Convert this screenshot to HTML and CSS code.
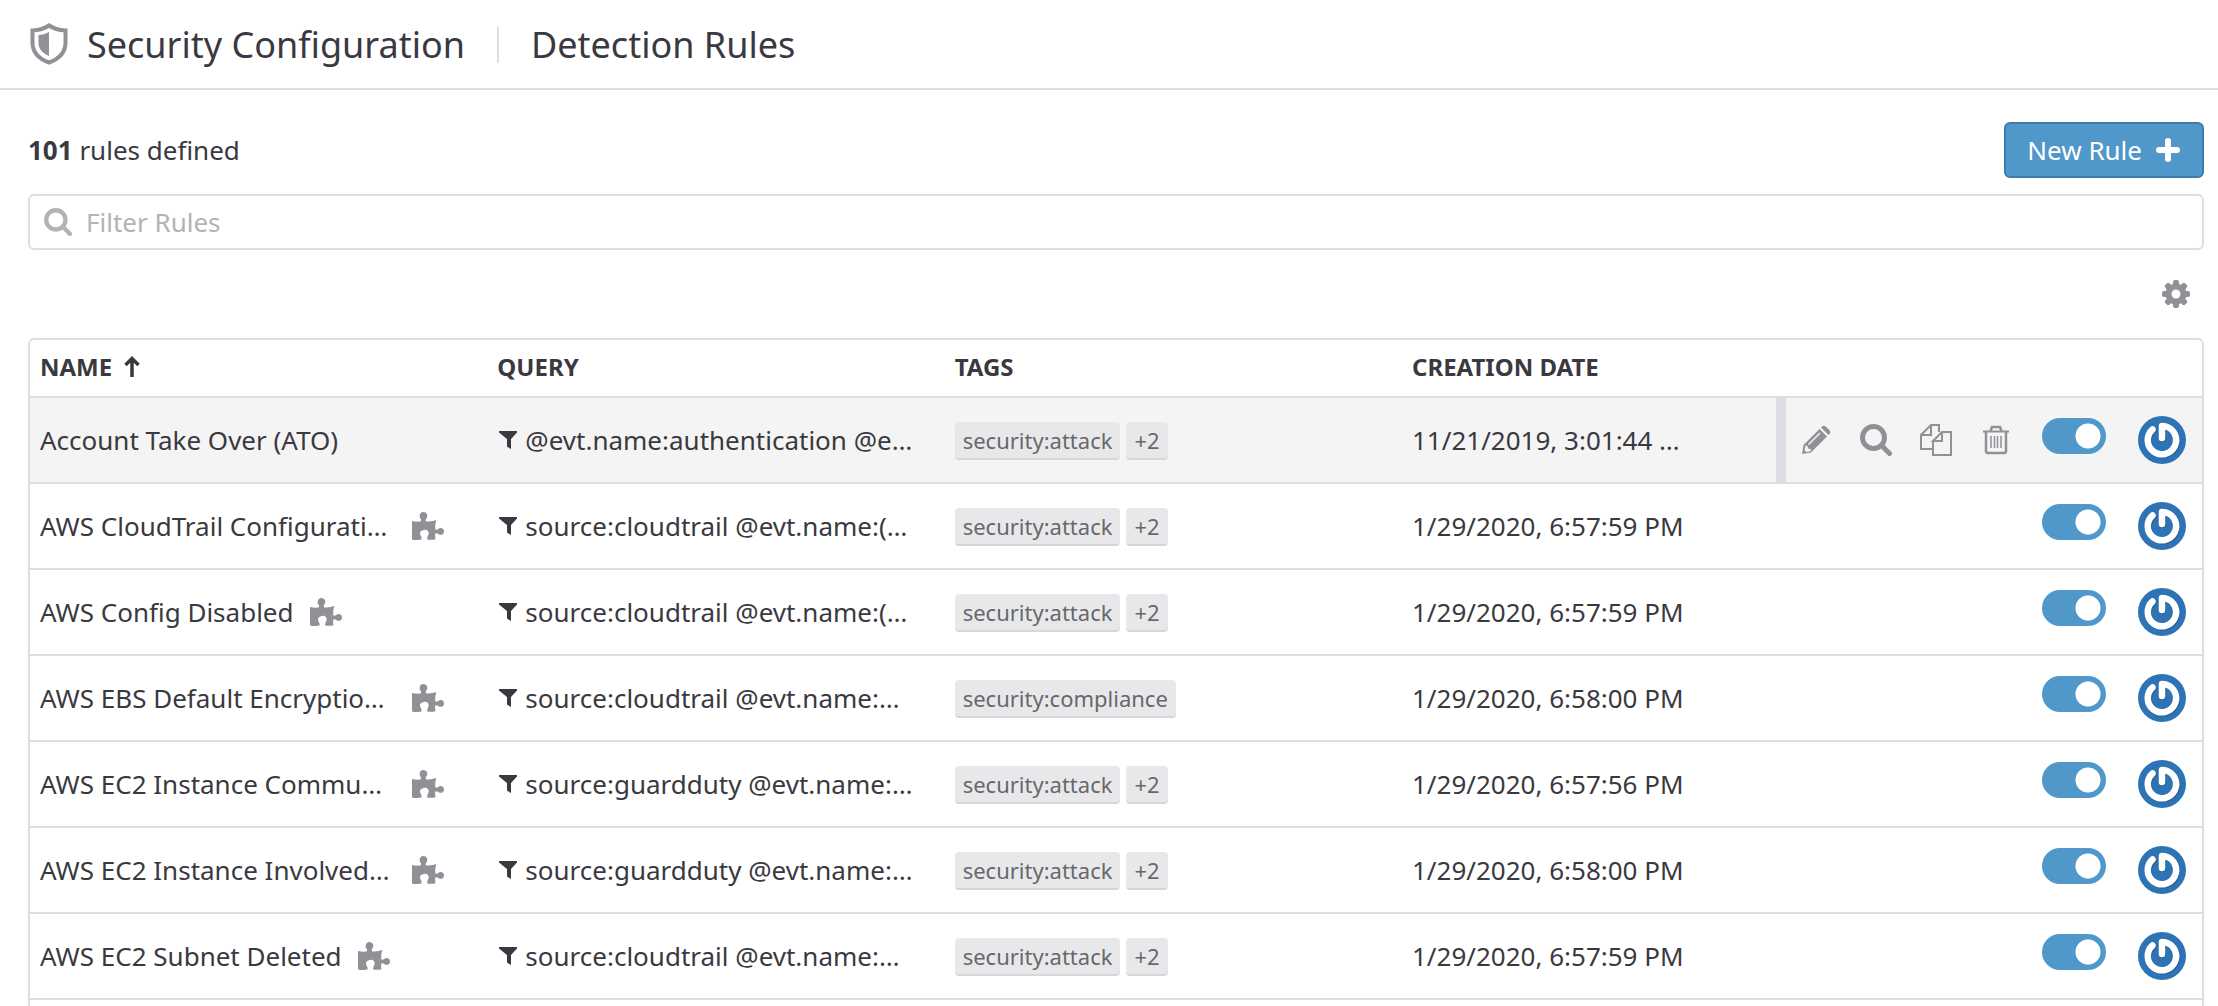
FILE: index.html
```html
<!DOCTYPE html>
<html lang="en">
<head>
<meta charset="utf-8">
<title>Detection Rules</title>
<link rel="stylesheet" href="styles.css">
</head>
<body>
<svg class="sprite" aria-hidden="true">
  <symbol id="search" viewBox="0 0 32 32"><circle cx="13.500" cy="13.500" r="11" fill="none" stroke="currentColor" stroke-width="5"/><path d="M21.500 21.500l8 8" stroke="currentColor" stroke-width="5" stroke-linecap="round"/></symbol>
  <symbol id="funnel" viewBox="0 0 18 18"><path d="M0 0h18v1.500l-6 6.500V18l-4-2.500V8L0 1.500z" fill="currentColor"/></symbol>
  <symbol id="puzzle" viewBox="0 0 32 28"><path d="M0 9c3 .6 6.500 1 9 .3V7.200C7.700 6.200 7.600 5 7.700 3.400 7.800 1.400 9.300 0 11.400 0s3.800 1.400 3.900 3.400c.1 1.600-.6 2.700-1.500 3.600v2.200c3.400.5 7 .1 10.600-1.200-1.200 3.300-1.300 6.600-1.100 9.600h2.400c.8-.9 1.700-1.500 3-1.500 2 0 3.300 1.400 3.300 3.300s-1.300 3.400-3.300 3.400c-1.300 0-2.200-.5-3-1.400h-2.500c-.3 1.700-.1 3.600.3 5.800-2.800.7-5.500.8-8.300.4-.1-1.500.1-2.600.6-3.600.5-.9.9-1.700.9-2.800 0-2.200-1.600-3.400-3.400-3.400S8 19 8 21.200c0 1.100.5 1.900.9 2.800.6 1 .8 2.200.7 3.600-3.200.5-6.400.5-9.600-.2z" fill="currentColor"/></symbol>
  <symbol id="avatar" viewBox="0 0 48 48"><circle cx="24" cy="24" r="24" fill="#2e74b5"/><g fill="none" stroke-linecap="round" stroke-linejoin="round" stroke-width="6.500"><path d="M14.500 13.500A14.200 14.200 0 1 0 28 10.500L24 10v12" stroke="#1f4f7d" opacity=".5" transform="translate(1 1)"/><path d="M14.500 13.500A14.200 14.200 0 1 0 28 10.500L24 10v12" stroke="#fff"/></g></symbol>
</svg>
<header class="topbar">
  <svg class="shield" viewBox="0 0 38 42" aria-hidden="true"><path d="M19 2.500C14 6 9 7.200 2.500 7.500v12C2.500 29 8 35.500 19 39.500 30 35.500 35.500 29 35.500 19.500v-12C29 7.200 24 6 19 2.500z" fill="none" stroke="currentColor" stroke-width="4"/><path d="M19 9v24C11.500 29.500 8.500 25.500 8.500 19.500v-7.500C12.500 11.800 15.500 11 19 9z" fill="currentColor"/></svg>
  <span class="section">Security Configuration</span>
  <h1 class="title">Detection Rules</h1>
</header>
<main class="main">
  <div class="summary">
    <p class="count"><strong>101</strong> rules defined</p>
    <button class="new-rule" type="button">New Rule
      <svg class="plus" viewBox="0 0 24 24" aria-hidden="true"><path d="M12 3v18M3 12h18" stroke="currentColor" stroke-width="6" stroke-linecap="round"/></svg>
    </button>
  </div>
  <label class="filter">
    <svg class="filter-icon" aria-hidden="true"><use href="#search"/></svg>
    <input class="filter-input" type="text" placeholder="Filter Rules" aria-label="Filter Rules">
  </label>
  <div class="tools">
    <button class="gear" type="button" aria-label="Table settings"><svg class="gear-icon" viewBox="-14 -14 28 28" aria-hidden="true"><g fill="currentColor"><g id="teeth"><rect x="-3" y="-14" width="6" height="28" rx="2"/><rect x="-14" y="-3" width="28" height="6" rx="2"/></g><use href="#teeth" transform="rotate(45)"/><circle r="10.500"/></g><circle r="4.500" fill="#fff"/></svg></button>
  </div>
  <div class="panel">
    <table class="rules">
      <colgroup><col><col><col><col class="col-date"><col class="col-actions"></colgroup>
      <thead>
        <tr>
          <th scope="col">NAME <svg class="sort" viewBox="0 0 16 22" aria-hidden="true"><path d="M8 21V3M1.500 9L8 2.500 14.500 9" fill="none" stroke="currentColor" stroke-width="3.500"/></svg></th>
          <th scope="col">QUERY</th><th scope="col">TAGS</th><th scope="col">CREATION DATE</th><td></td>
        </tr>
      </thead>
      <tbody>
        <tr class="active">
          <td><div class="name"><span class="text">Account Take Over (ATO)</span></div></td>
          <td><div class="query"><svg class="funnel" aria-hidden="true"><use href="#funnel"/></svg><span class="text">@evt.name:authentication @e…</span></div></td>
          <td><div class="tags"><span class="tag">security:attack</span><span class="tag">+2</span></div></td>
          <td>11/21/2019, 3:01:44 …</td>
          <td class="actions-cell"><div class="actions">
            <div class="row-tools">
              <button class="tool" type="button" aria-label="Edit"><svg class="icon" viewBox="0 0 32 32" aria-hidden="true"><path d="M2 30l1.500-9L19.500 5l7.500 7.500L11 28.500z" fill="currentColor"/><path d="M21 3.500l1.600-1.400q1.400-1 2.800.2l4.300 4.300q1.200 1.400.2 2.800L28.500 11z" fill="currentColor"/><path d="M8.500 20.500L20 9" stroke="#f4f4f4" stroke-width="1.500"/><path d="M4.500 26l1-4.500 2 .5.500 2.500 2.500.5.500 2-4.500 1z" fill="#f4f4f4"/></svg></button>
              <button class="tool" type="button" aria-label="View"><svg class="icon" aria-hidden="true"><use href="#search"/></svg></button>
              <button class="tool" type="button" aria-label="Clone"><svg class="icon" viewBox="0 0 32 32" fill="none" stroke="currentColor" stroke-width="2" aria-hidden="true"><path d="M12 25H1V11L11 1h8v7M1 11h10V1M13 17v14h18V8H22l-9 9h9V8"/></svg></button>
              <button class="tool" type="button" aria-label="Delete"><svg class="icon" viewBox="0 0 32 32" fill="none" stroke="currentColor" aria-hidden="true"><path d="M3 7.500h26" stroke-width="2"/><path d="M10.500 7l1.500-4h8l1.500 4M6 8v19q0 2 2 2h16q2 0 2-2V8" stroke-width="2.500"/><path d="M11 12v12M14.500 12v12M17.500 12v12M21 12v12" stroke-width="1.500"/></svg></button>
            </div>
            <input class="toggle" type="checkbox" role="switch" aria-label="Enable Account Take Over (ATO)" checked>
            <svg class="avatar" aria-hidden="true"><use href="#avatar"/></svg>
          </div></td>
        </tr>
        <tr>
          <td><div class="name"><span class="text">AWS CloudTrail Configurati…</span><svg class="puzzle push" aria-hidden="true"><use href="#puzzle"/></svg></div></td>
          <td><div class="query"><svg class="funnel" aria-hidden="true"><use href="#funnel"/></svg><span class="text">source:cloudtrail @evt.name:(…</span></div></td>
          <td><div class="tags"><span class="tag">security:attack</span><span class="tag">+2</span></div></td>
          <td>1/29/2020, 6:57:59 PM</td>
          <td class="actions-cell"><div class="actions"><input class="toggle" type="checkbox" role="switch" aria-label="Enable AWS CloudTrail Configurati…" checked><svg class="avatar" aria-hidden="true"><use href="#avatar"/></svg></div></td>
        </tr>
        <tr>
          <td><div class="name"><span class="text">AWS Config Disabled</span><svg class="puzzle" aria-hidden="true"><use href="#puzzle"/></svg></div></td>
          <td><div class="query"><svg class="funnel" aria-hidden="true"><use href="#funnel"/></svg><span class="text">source:cloudtrail @evt.name:(…</span></div></td>
          <td><div class="tags"><span class="tag">security:attack</span><span class="tag">+2</span></div></td>
          <td>1/29/2020, 6:57:59 PM</td>
          <td class="actions-cell"><div class="actions"><input class="toggle" type="checkbox" role="switch" aria-label="Enable AWS Config Disabled" checked><svg class="avatar" aria-hidden="true"><use href="#avatar"/></svg></div></td>
        </tr>
        <tr>
          <td><div class="name"><span class="text">AWS EBS Default Encryptio…</span><svg class="puzzle push" aria-hidden="true"><use href="#puzzle"/></svg></div></td>
          <td><div class="query"><svg class="funnel" aria-hidden="true"><use href="#funnel"/></svg><span class="text">source:cloudtrail @evt.name:…</span></div></td>
          <td><div class="tags"><span class="tag">security:compliance</span></div></td>
          <td>1/29/2020, 6:58:00 PM</td>
          <td class="actions-cell"><div class="actions"><input class="toggle" type="checkbox" role="switch" aria-label="Enable AWS EBS Default Encryptio…" checked><svg class="avatar" aria-hidden="true"><use href="#avatar"/></svg></div></td>
        </tr>
        <tr>
          <td><div class="name"><span class="text">AWS EC2 Instance Commu…</span><svg class="puzzle push" aria-hidden="true"><use href="#puzzle"/></svg></div></td>
          <td><div class="query"><svg class="funnel" aria-hidden="true"><use href="#funnel"/></svg><span class="text">source:guardduty @evt.name:…</span></div></td>
          <td><div class="tags"><span class="tag">security:attack</span><span class="tag">+2</span></div></td>
          <td>1/29/2020, 6:57:56 PM</td>
          <td class="actions-cell"><div class="actions"><input class="toggle" type="checkbox" role="switch" aria-label="Enable AWS EC2 Instance Commu…" checked><svg class="avatar" aria-hidden="true"><use href="#avatar"/></svg></div></td>
        </tr>
        <tr>
          <td><div class="name"><span class="text">AWS EC2 Instance Involved…</span><svg class="puzzle push" aria-hidden="true"><use href="#puzzle"/></svg></div></td>
          <td><div class="query"><svg class="funnel" aria-hidden="true"><use href="#funnel"/></svg><span class="text">source:guardduty @evt.name:…</span></div></td>
          <td><div class="tags"><span class="tag">security:attack</span><span class="tag">+2</span></div></td>
          <td>1/29/2020, 6:58:00 PM</td>
          <td class="actions-cell"><div class="actions"><input class="toggle" type="checkbox" role="switch" aria-label="Enable AWS EC2 Instance Involved…" checked><svg class="avatar" aria-hidden="true"><use href="#avatar"/></svg></div></td>
        </tr>
        <tr>
          <td><div class="name"><span class="text">AWS EC2 Subnet Deleted</span><svg class="puzzle" aria-hidden="true"><use href="#puzzle"/></svg></div></td>
          <td><div class="query"><svg class="funnel" aria-hidden="true"><use href="#funnel"/></svg><span class="text">source:cloudtrail @evt.name:…</span></div></td>
          <td><div class="tags"><span class="tag">security:attack</span><span class="tag">+2</span></div></td>
          <td>1/29/2020, 6:57:59 PM</td>
          <td class="actions-cell"><div class="actions"><input class="toggle" type="checkbox" role="switch" aria-label="Enable AWS EC2 Subnet Deleted" checked><svg class="avatar" aria-hidden="true"><use href="#avatar"/></svg></div></td>
        </tr>
      </tbody>
    </table>
  </div>
</main>
</body>
</html>
```
FILE: styles.css
```css
:root {
  --ink: #3a393f;
  --line: #dedde3;
  --muted: #929096;
  --blue: #4f98c9;
}

* { box-sizing: border-box; }

body {
  display: flex;
  flex-direction: column;
  min-height: 100vh;
  margin: 0;
  background: #fff;
  color: var(--ink);
  font: 26px/36px "Noto Sans", sans-serif;
}

svg { display: block; flex: none; }
button { padding: 0; border: 0; background: none; color: inherit; font: inherit; }

.sprite { position: absolute; width: 0; height: 0; }

.topbar {
  display: flex;
  align-items: center;
  height: 90px;
  padding: 2px 28px 0;
  border-bottom: 2px solid var(--line);
  font-size: 36px;
}
.shield { width: 38px; height: 42px; margin: 0 19px 2px 2px; color: var(--muted); }
.section { margin-right: 32px; }
.title {
  margin: 0;
  padding-left: 32px;
  border-left: 2px solid var(--line);
  font-size: 36px;
  font-weight: 400;
}

.main {
  display: flex;
  flex: 1;
  flex-direction: column;
  padding: 32px 14px 0 28px;
}

.summary { display: flex; align-items: center; justify-content: space-between; margin-bottom: 16px; }
.count { margin: 0; }
.new-rule {
  display: flex;
  align-items: center;
  gap: 14px;
  height: 56px;
  padding: 0 22px 0 21px;
  border: 2px solid #3f7ba8;
  border-radius: 6px;
  background: var(--blue);
  color: #fff;
}
.plus { width: 24px; height: 24px; }

.filter {
  display: flex;
  align-items: center;
  gap: 14px;
  height: 56px;
  padding: 0 14px;
  border: 2px solid var(--line);
  border-radius: 6px;
}
.filter-icon { width: 28px; height: 28px; color: #b3b2b8; }
.filter-input {
  flex: 1;
  min-width: 0;
  padding: 0;
  border: 0;
  outline: 0;
  background: none;
  color: inherit;
  font: inherit;
}
.filter-input::placeholder { color: #b3b2b8; opacity: 1; }

.tools { display: flex; align-items: center; justify-content: flex-end; height: 88px; padding-right: 14px; }
.gear { color: var(--muted); }
.gear-icon { width: 28px; height: 28px; }

.panel {
  flex: 1;
  border: 2px solid var(--line);
  border-bottom: 0;
  border-radius: 6px 6px 0 0;
}
.rules { width: 100%; table-layout: fixed; border-collapse: separate; border-spacing: 0; }
.col-date { width: 288px; }
.col-actions { width: 512px; }
.rules th,
.rules td {
  height: 86px;
  padding: 0 10px;
  border-bottom: 2px solid var(--line);
  text-align: left;
  white-space: nowrap;
}
.rules thead th,
.rules thead td { height: 58px; padding-bottom: 2px; font-size: 24px; font-weight: 700; }
.active { background: #f4f4f4; }
.sort { display: inline-block; width: 16px; height: 22px; margin-left: 6px; vertical-align: -2px; }

.name { display: flex; align-items: center; gap: 16px; padding-right: 33px; }
.text { overflow: hidden; text-overflow: ellipsis; }
.puzzle { width: 32px; height: 28px; color: var(--muted); }
.push { margin-left: auto; }
.query { display: flex; align-items: center; gap: 8px; padding-left: 2px; }
.funnel { width: 18px; height: 18px; }

.tags { display: flex; gap: 6px; padding-top: 2px; }
.tag {
  height: 38px;
  padding: 0 8px;
  border-bottom: 2px solid #d6d6d8;
  border-radius: 4px;
  background: #e8e8ea;
  color: #68676c;
  font-size: 22px;
}

.rules .actions-cell { padding: 0; }
.actions {
  display: flex;
  align-items: center;
  justify-content: flex-end;
  height: 84px;
  padding-right: 16px;
}
.row-tools {
  display: flex;
  align-self: stretch;
  margin-right: 16px;
  border-left: 10px solid var(--line);
  color: var(--muted);
}
.tool { display: grid; place-items: center; width: 60px; }
.icon { width: 32px; height: 32px; }
.toggle {
  width: 64px;
  height: 36px;
  margin: 0 32px 8px 0;
  border-radius: 18px;
  appearance: none;
  background: radial-gradient(circle at 46px 18px, #fff 12px, var(--blue) 13px);
}
.toggle:not(:checked) { background: radial-gradient(circle at 18px 18px, #fff 12px, var(--muted) 13px); }
.avatar { width: 48px; height: 48px; }
```
